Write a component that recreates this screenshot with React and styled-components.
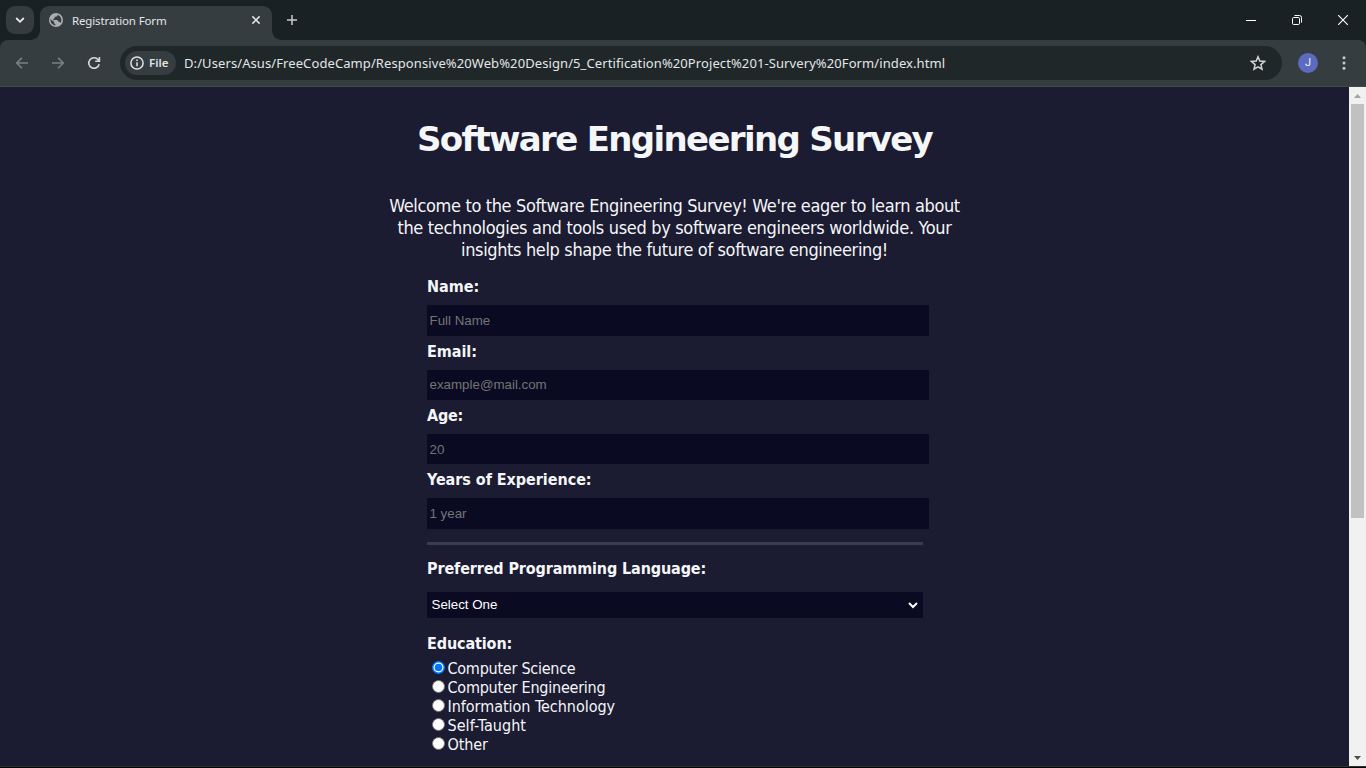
import React from "react";
import styled, { createGlobalStyle } from "styled-components";

const GlobalStyle = createGlobalStyle`
  * { box-sizing: border-box; }
  body { margin: 0; background: #1b1b32; overflow: hidden; }
`;

const uiFont = `"Noto Sans", "Open Sans", sans-serif`;
const pageFont = `"DejaVu Sans Condensed", "DejaVu Sans", sans-serif`;

const Window = styled.div`
  width: 1366px;
  height: 768px;
  display: flex;
  flex-direction: column;
  background: #1b1b32;
  overflow: hidden;
`;

const TabStrip = styled.div`
  flex: none;
  height: 40px;
  background: #1a2124;
  display: flex;
  align-items: flex-start;
  padding-left: 6px;
`;

const TabSearch = styled.button`
  width: 28px;
  height: 28px;
  margin: 6px 6px 0 0;
  padding: 0;
  border: 0;
  border-radius: 9px;
  background: #343c3f;
  display: grid;
  place-items: center;
`;

const Tab = styled.div`
  position: relative;
  width: 232px;
  height: 34px;
  margin-top: 6px;
  padding: 0 9px;
  border-radius: 9px 9px 0 0;
  background: #363d40;
  display: flex;
  align-items: center;
  &::before, &::after {
    content: "";
    position: absolute;
    bottom: 0;
    width: 9px;
    height: 9px;
  }
  &::before {
    left: -9px;
    background: radial-gradient(circle at 0 0, transparent 8.5px, #363d40 9px);
  }
  &::after {
    right: -9px;
    background: radial-gradient(circle at 100% 0, transparent 8.5px, #363d40 9px);
  }
  & > svg { margin-bottom: 6px; }
`;

const TabTitle = styled.span`
  flex: 1;
  margin: 0 0 5px 9px;
  font: 11.5px/16px ${uiFont};
  letter-spacing: -0.14px;
  color: #e3e6e7;
  white-space: nowrap;
`;

const NewTab = styled.div`
  margin: 14px 0 0 14px;
  display: flex;
`;

const WindowControls = styled.div`
  margin-left: auto;
  display: flex;
  & > span {
    width: 46px;
    height: 40px;
    display: grid;
    place-items: center;
  }
`;

const ToolbarBack = styled.div`
  flex: none;
  background: #1a2124;
`;

const Toolbar = styled.div`
  height: 47px;
  background: #363d40;
  border-radius: 8px 8px 0 0;
  border-bottom: 1px solid #464844;
  display: flex;
  align-items: center;
`;

const NavButtons = styled.div`
  display: flex;
  gap: 20px;
  padding-left: 14px;
  width: 120px;
`;

const AddressBar = styled.div`
  width: 1162px;
  height: 34px;
  border-radius: 17px;
  background: #1f2729;
  display: flex;
  align-items: center;
  padding: 0 16px 0 5px;
`;

const FileChip = styled.span`
  width: 51px;
  height: 24px;
  border-radius: 12px;
  background: #363d40;
  display: flex;
  align-items: center;
  gap: 5px;
  padding-left: 5px;
  font: 600 11.5px/24px ${uiFont};
  color: #e0e3e4;
`;

const Url = styled.span`
  margin-left: 8px;
  font: 13px/20px ${uiFont};
  letter-spacing: 0.092px;
  color: #e3e6e7;
  white-space: nowrap;
`;

const Push = styled.span`
  margin-left: auto;
  display: flex;
`;

const Avatar = styled.span`
  width: 20px;
  height: 20px;
  margin: 0 24px 0 16px;
  border-radius: 50%;
  background: #5c6bc0;
  color: #f2f3fa;
  font: 11px/20px Roboto, sans-serif;
  text-align: center;
`;

const Viewport = styled.div`
  flex: 1;
  min-height: 0;
  display: flex;
`;

const Page = styled.main`
  flex: 1;
  color: #f5f6f7;
  font-family: ${pageFont};
  font-size: 16px;
`;

const Title = styled.h1`
  margin: 30px 0 0;
  font: bold 34px/44px "DejaVu Sans", sans-serif;
  letter-spacing: -1.67px;
  text-align: center;
  white-space: nowrap;
`;

const Intro = styled.p`
  margin: 34px 0 0;
  font-size: 18px;
  line-height: 22px;
  text-align: center;
`;

const IntroLine = styled.span`
  letter-spacing: ${(p) => p.$ls}px;
  white-space: nowrap;
`;

const Form = styled.form`
  width: 502px;
  margin: 15.2px 0 0 427px;
`;

const Field = styled.div`
  height: 64.4px;
`;

const Label = styled.label`
  display: block;
  width: max-content;
  font-size: 16px;
  font-weight: bold;
  line-height: 20px;
  letter-spacing: ${(p) => p.$ls || 0}px;
  white-space: nowrap;
`;

const FieldLabel = styled(Label)`
  line-height: 21px;
`;

const Input = styled.input`
  display: block;
  width: 502px;
  height: 30.5px;
  margin-top: 8px;
  padding: 1px 2.5px;
  border: 0;
  background: #0a0a23;
  font: 13.333px "Liberation Sans", Arial, sans-serif;
  color: #f5f6f7;
  &::placeholder { color: #757575; }
`;

const Divider = styled.div`
  width: 496px;
  height: 3px;
  margin: 8.2px 0 14px;
  background: #3b3b4f;
`;

const Select = styled.div`
  width: 496px;
  height: 26px;
  margin: 13px 0 16px;
  padding: 0 4px 0 4.5px;
  background: #0a0a23;
  color: #fff;
  font: 13.333px/26px "Liberation Sans", Arial, sans-serif;
  display: flex;
  align-items: center;
  justify-content: space-between;
`;

const Options = styled.div`
  display: flex;
  flex-direction: column;
  padding: 5px 0 0 5px;
`;

const Option = styled.div`
  display: flex;
  align-items: center;
  gap: 2.5px;
  height: 19px;
  line-height: 19px;
  & > svg { margin-top: -2px; }
`;

const OptionText = styled.span`
  letter-spacing: ${(p) => p.$ls || 0}px;
  white-space: nowrap;
`;

const Scrollbar = styled.div`
  width: 17px;
  height: 679px;
  background: #f1f1f1;
  display: flex;
  flex-direction: column;
  align-items: center;
`;

const Thumb = styled.div`
  width: 13px;
  height: 414px;
  background: #c1c1c1;
`;

const Arrow = styled.span`
  height: 17px;
  display: grid;
  place-items: center;
  margin-top: ${(p) => (p.$end ? "auto" : "0")};
`;

const Taskbar = styled.div`
  flex: none;
  height: 2px;
  background: #050505;
  border-top: 1px solid #303030;
`;

const fields = [
  { label: "Name:", hint: "Full Name", ls: 0 },
  { label: "Email:", hint: "example@mail.com", ls: -0.05 },
  { label: "Age:", hint: "20", ls: -0.2 },
  { label: "Years of Experience:", hint: "1 year", ls: -0.05 },
];

const options = [
  { text: "Computer Science", ls: -0.25, checked: true },
  { text: "Computer Engineering", ls: -0.23 },
  { text: "Information Technology", ls: -0.03 },
  { text: "Self-Taught", ls: 0.06 },
  { text: "Other", ls: -0.1 },
];

const Radio = ({ checked }) => (
  <svg width="13" height="13" viewBox="0 0 13 13">
    <circle cx="6.5" cy="6.5" r={checked ? 5.75 : 6} fill="#fff" stroke={checked ? "#0075ff" : "#767676"} strokeWidth={checked ? 1.5 : 1} />
    {checked && <circle cx="6.5" cy="6.5" r="3.8" fill="#0075ff" />}
  </svg>
);

export default function App() {
  return (
    <Window>
      <GlobalStyle />
      <TabStrip>
        <TabSearch>
          <svg width="10" height="10" viewBox="0 0 10 10" fill="none" stroke="#e8eaeb" strokeWidth="1.8">
            <path d="M1.2 3l3.8 3.8L8.8 3" />
          </svg>
        </TabSearch>
        <Tab>
          <svg width="14" height="14" viewBox="0 0 14 14">
            <circle cx="7" cy="7" r="7" fill="#a9afb2" />
            <path d="M1.5 6.2l3.6 2.6v1.4l1.3 1v1.2C3.6 12.2 1.2 9.6 1.5 6.2zM8.6 1.7v.7L7.2 3.7H5.6v1.5L4.2 5.9v1h4.2l.9 1.9h1.3l1 1.1c1.6-2.7.6-6.8-3-8.2z" fill="#363d40" />
          </svg>
          <TabTitle>Registration Form</TabTitle>
          <svg width="14" height="14" viewBox="0 0 14 14" stroke="#e3e6e7" strokeWidth="1.5">
            <path d="M3.4 3.4l7.2 7.2M10.6 3.4l-7.2 7.2" />
          </svg>
        </Tab>
        <NewTab>
          <svg width="12" height="12" viewBox="0 0 12 12" stroke="#c9cccd" strokeWidth="1.5">
            <path d="M6 1v10M1 6h10" />
          </svg>
        </NewTab>
        <WindowControls>
          <span>
            <svg width="10" height="10" viewBox="0 0 10 10" stroke="#fff">
              <path d="M0 5.5h10" />
            </svg>
          </span>
          <span>
            <svg width="10" height="10" viewBox="0 0 10 10" fill="none" stroke="#fff">
              <rect x="0.5" y="2.5" width="7" height="7" rx="1.2" />
              <path d="M2.5 .5H7.5Q9.5 .5 9.5 2.5V7.5" />
            </svg>
          </span>
          <span>
            <svg width="10" height="10" viewBox="0 0 10 10" stroke="#fff" strokeWidth="1.1">
              <path d="M0 0l10 10M10 0L0 10" />
            </svg>
          </span>
        </WindowControls>
      </TabStrip>
      <ToolbarBack>
        <Toolbar>
          <NavButtons>
            <svg width="16" height="16" viewBox="0 0 16 16" fill="none" stroke="#7a8083" strokeWidth="1.6">
              <path d="M14 8H3M8 2.7L2.7 8 8 13.3" />
            </svg>
            <svg width="16" height="16" viewBox="0 0 16 16" fill="none" stroke="#7a8083" strokeWidth="1.6">
              <path d="M2 8h11M8 2.7L13.3 8 8 13.3" />
            </svg>
            <svg width="16" height="16" viewBox="0 0 16 16" fill="none" stroke="#d6d9da" strokeWidth="1.6">
              <path d="M13.2 9.2A5.3 5.3 0 1 1 12.2 4.7L13.2 6M13.4 2v4.3H9.2" />
            </svg>
          </NavButtons>
          <AddressBar>
            <FileChip>
              <svg width="14" height="14" viewBox="0 0 14 14" fill="none" stroke="#e0e3e4" strokeWidth="1.5">
                <circle cx="7" cy="7" r="6.1" />
                <path d="M7 6.2v4.1M7 3.6v1.5" />
              </svg>
              <span>File</span>
            </FileChip>
            <Url>D:/Users/Asus/FreeCodeCamp/Responsive%20Web%20Design/5_Certification%20Project%201-Survery%20Form/index.html</Url>
            <Push>
              <svg width="16" height="16" viewBox="0 0 16 16" fill="none" stroke="#d3d6d7" strokeWidth="1.5">
                <path d="M8 1.8l1.8 4.3 4.7.4-3.6 3.1 1.1 4.6L8 11.8l-4 2.4 1.1-4.6L1.5 6.5l4.7-.4z" />
              </svg>
            </Push>
          </AddressBar>
          <Avatar>J</Avatar>
          <svg width="4" height="14" viewBox="0 0 4 14" fill="#c8cbcc">
            <circle cx="2" cy="1.7" r="1.5" />
            <circle cx="2" cy="7" r="1.5" />
            <circle cx="2" cy="12.3" r="1.5" />
          </svg>
        </Toolbar>
      </ToolbarBack>
      <Viewport>
        <Page>
          <Title>Software Engineering Survey</Title>
          <Intro>
            <IntroLine $ls={-0.36}>Welcome to the Software Engineering Survey! We're eager to learn about</IntroLine>
            <br />
            <IntroLine $ls={-0.32}>the technologies and tools used by software engineers worldwide. Your</IntroLine>
            <br />
            <IntroLine $ls={-0.36}>insights help shape the future of software engineering!</IntroLine>
          </Intro>
          <Form>
            {fields.map((f) => (
              <Field key={f.label}>
                <FieldLabel $ls={f.ls}>{f.label}</FieldLabel>
                <Input placeholder={f.hint} />
              </Field>
            ))}
            <Divider />
            <Label $ls={-0.13}>Preferred Programming Language:</Label>
            <Select>
              <span>Select One</span>
              <svg width="12" height="8" viewBox="0 0 12 8" fill="none" stroke="#fff" strokeWidth="2">
                <path d="M2 2l4 4 4-4" />
              </svg>
            </Select>
            <Label $ls={-0.12}>Education:</Label>
            <Options>
              {options.map((o) => (
                <Option key={o.text}>
                  <Radio checked={o.checked} />
                  <OptionText $ls={o.ls}>{o.text}</OptionText>
                </Option>
              ))}
            </Options>
          </Form>
        </Page>
        <Scrollbar>
          <Arrow>
            <svg width="7" height="4" viewBox="0 0 7 4" fill="#a3a3a3"><path d="M0 4L3.5 0 7 4z" /></svg>
          </Arrow>
          <Thumb />
          <Arrow $end>
            <svg width="7" height="4" viewBox="0 0 7 4" fill="#505050"><path d="M0 0h7L3.5 4z" /></svg>
          </Arrow>
        </Scrollbar>
      </Viewport>
      <Taskbar />
    </Window>
  );
}
